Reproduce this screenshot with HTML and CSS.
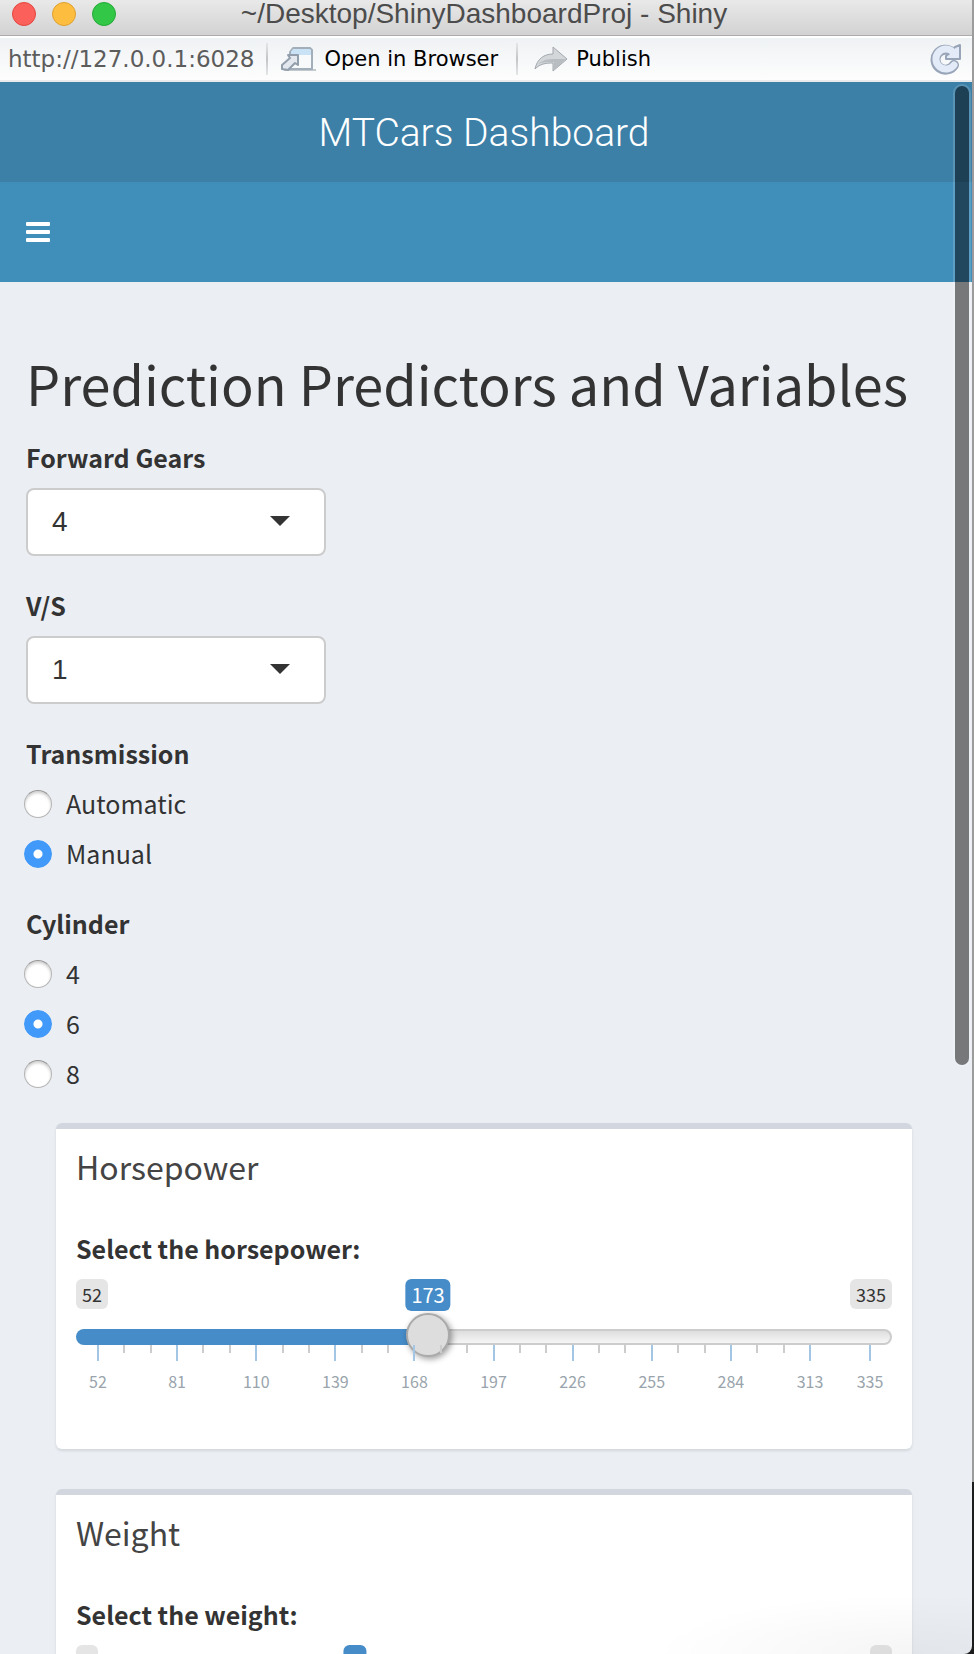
FILE: index.html
```html
<!DOCTYPE html>
<html lang="en">
<head>
<meta charset="utf-8">
<title>~/Desktop/ShinyDashboardProj - Shiny</title>
<link rel="stylesheet" href="styles.css">
</head>
<body>
<div class="window">
  <header class="titlebar">
    <div class="lights">
      <button class="light light-close" type="button" aria-label="Close"></button>
      <button class="light light-min" type="button" aria-label="Minimize"></button>
      <button class="light light-zoom" type="button" aria-label="Zoom"></button>
    </div>
    <div class="window-title">~/Desktop/ShinyDashboardProj - Shiny</div>
  </header>

  <div class="toolbar">
    <span class="address">http://127.0.0.1:6028</span>
    <span class="divider"></span>
    <button class="tool" type="button">
      <svg width="36" height="26" viewBox="0 0 36 26" aria-hidden="true">
        <path d="M4 24H36" stroke="#c3c8cd" stroke-width="2"/>
        <path d="M10 22V6L13 2H30L32 4V23H10Z" fill="#f7f9fb" stroke="#a3aebb" stroke-width="2" stroke-linejoin="round"/>
        <path d="M11 9V6L13 3H30L31 5V9Z" fill="#c9e2f5"/>
        <path d="M8 9H18V19L15 17L8 24L2 23L2 19L10 12Z" fill="#e3e8ee" stroke="#939eac" stroke-width="2" stroke-linejoin="round"/>
      </svg>
      <span>Open in Browser</span>
    </button>
    <span class="divider"></span>
    <button class="tool tool-publish" type="button">
      <svg width="34" height="26" viewBox="0 0 34 26" aria-hidden="true">
        <path d="M1 23C3 13 10 8 19 8V1L33 13L19 25V17C11 17 6 18 1 23Z" fill="#d3d7da" stroke="#a3a8ad" stroke-width="1"/>
        <path d="M3 19C6 16 11 13 19 13H32L20 24V16C11 16 7 16 3 19Z" fill="#b8bdc1"/>
      </svg>
      <span>Publish</span>
    </button>
    <button class="tool tool-refresh" type="button" aria-label="Refresh">
      <svg width="32" height="32" viewBox="0 0 32 32" aria-hidden="true">
        <path d="M22 9A10 10 0 1 0 24 22" fill="none" stroke="#98a4b8" stroke-width="10" stroke-linecap="round"/>
        <path d="M30 2V16H16V13L20 10L25 4Z" fill="#e2ebf7" stroke="#98a4b8" stroke-width="2" stroke-linejoin="round"/>
        <path d="M23 9A10 10 0 1 0 24 22" fill="none" stroke="#e2ebf7" stroke-width="7" stroke-linecap="round"/>
      </svg>
    </button>
  </div>

  <div class="viewport">
    <div class="brand">MTCars Dashboard</div>
    <nav class="navbar">
      <button class="menu-toggle" type="button" aria-label="Toggle navigation">
        <span></span><span></span><span></span>
      </button>
    </nav>

    <main class="content">
      <h2 class="page-title">Prediction Predictors and Variables</h2>

      <div class="field">
        <label class="field-label" for="gears">Forward Gears</label>
        <div class="select">
          <select id="gears"><option>3</option><option selected>4</option><option>5</option></select>
        </div>
      </div>

      <div class="field">
        <label class="field-label" for="vs">V/S</label>
        <div class="select">
          <select id="vs"><option>0</option><option selected>1</option></select>
        </div>
      </div>

      <fieldset class="field options">
        <legend class="field-label">Transmission</legend>
        <label class="option"><input type="radio" name="am"><span>Automatic</span></label>
        <label class="option"><input type="radio" name="am" checked><span>Manual</span></label>
      </fieldset>

      <fieldset class="field options">
        <legend class="field-label">Cylinder</legend>
        <label class="option"><input type="radio" name="cyl"><span>4</span></label>
        <label class="option"><input type="radio" name="cyl" checked><span>6</span></label>
        <label class="option"><input type="radio" name="cyl"><span>8</span></label>
      </fieldset>

      <section class="box">
        <h3 class="box-title">Horsepower</h3>
        <label class="field-label" for="hp">Select the horsepower:</label>
        <div class="slider" data-step="29" data-minor="3">
          <div class="slider-badges">
            <span class="badge">52</span>
            <output class="badge badge-value" for="hp">173</output>
            <span class="badge">335</span>
          </div>
          <input id="hp" type="range" min="52" max="335" value="173">
          <div class="ticks"></div>
        </div>
      </section>

      <section class="box">
        <h3 class="box-title">Weight</h3>
        <label class="field-label" for="wt">Select the weight:</label>
        <div class="slider" data-step="1" data-minor="3">
          <div class="slider-badges">
            <span class="badge">2</span>
            <output class="badge badge-value" for="wt">3</output>
            <span class="badge">5</span>
          </div>
          <input id="wt" type="range" min="2" max="5" value="3">
          <div class="ticks"></div>
        </div>
      </section>
    </main>
    <div class="scroll-thumb"></div>
    <div class="corner-shade"></div>
  </div>
</div>
<script src="slider.js"></script>
</body>
</html>
```
FILE: styles.css
```css
* { box-sizing: border-box; }

html { height: 100%; }

body {
  height: 100%;
  margin: 0;
  padding-right: 2px;
  overflow: hidden;
  background: linear-gradient(#9c9c9c calc(100% - 172px), #1c1c1c calc(100% - 172px));
  color: #333;
  font-family: "Noto Sans CJK SC", "Noto Sans", sans-serif;
  font-size: 25px;
  line-height: 40px;
}

button {
  padding: 0;
  border: 0;
  background: none;
  color: inherit;
  font: inherit;
}

.window {
  display: flex;
  flex-direction: column;
  height: 100%;
  overflow: hidden;
  border-bottom-right-radius: 8px;
  background: #ebeff4;
}

.titlebar {
  display: grid;
  grid-template-columns: 1fr auto 1fr;
  align-items: center;
  flex: none;
  height: 36px;
  padding: 0 16px 8px 12px;
  border-bottom: 1px solid #acacac;
  background: linear-gradient(#e9e9e9, #d2d2d2);
}

.lights { display: flex; gap: 16px; }

.light {
  width: 24px;
  height: 24px;
  border: 1px solid;
  border-radius: 50%;
}
.light-close { border-color: #e2463f; background: #fc605b; }
.light-min { border-color: #dfa033; background: #fdbe40; }
.light-zoom { border-color: #24a938; background: #33c748; }

.window-title {
  color: #4c4c4c;
  font: 28px/28px "Liberation Sans", Arial, sans-serif;
}

.toolbar {
  display: flex;
  align-items: center;
  gap: 12px;
  flex: none;
  height: 46px;
  padding: 0 10px 0 8px;
  border-top: 2px solid #fff;
  border-bottom: 2px solid #e8eaec;
  background: linear-gradient(#eff2f4, #fdfdfd);
  color: #000;
  font: 21px/28px "DejaVu Sans", sans-serif;
}

.address { color: #5c5c5c; font-size: 23px; }

.divider {
  width: 2px;
  height: 32px;
  background: linear-gradient(#e4e6e8, #c2c4c6, #e4e6e8);
}

.tool { display: flex; align-items: center; gap: 8px; padding-right: 6px; }
.tool-publish { padding-left: 4px; }
.tool-refresh { margin-left: auto; padding: 0; }

.viewport {
  position: relative;
  flex: 1;
  min-height: 0;
  overflow: hidden;
}

.brand {
  height: 100px;
  padding: 2px 4px 0 0;
  background: #3c80a8;
  color: #fff;
  font: 300 39px/98px Roboto, "Liberation Sans", sans-serif;
  text-align: center;
}

.navbar {
  display: flex;
  align-items: center;
  height: 100px;
  padding: 0 26px;
  background: #408eba;
}

.menu-toggle { display: grid; gap: 4px; width: 24px; }
.menu-toggle span { height: 4px; border-radius: 1px; background: #fff; }

.content { padding: 68px 60px 0 26px; }

.page-title {
  margin: 0 0 21px;
  font-size: 54px;
  font-weight: 400;
  line-height: 66px;
  white-space: nowrap;
}

.field {
  min-width: 0;
  margin: 0 0 29px;
  padding: 0;
  border: 0;
}

.field-label {
  display: block;
  margin-bottom: 11px;
  padding: 0;
  font-weight: 700;
}

.select { position: relative; width: 300px; }

.select::after {
  content: "";
  position: absolute;
  top: 28px;
  right: 36px;
  border: 10px solid transparent;
  border-top-color: #333;
  border-bottom: 0;
  pointer-events: none;
}

.select select {
  display: block;
  width: 100%;
  height: 68px;
  padding: 0 24px;
  border: 2px solid #ccc;
  border-radius: 8px;
  appearance: none;
  background: #fff;
  color: #333;
  font: 28px/40px "Liberation Sans", Arial, sans-serif;
}

.options { margin-bottom: 19px; }

.option {
  display: flex;
  align-items: center;
  gap: 14px;
  height: 40px;
  margin: 0 0 10px -2px;
}

.option span { padding-bottom: 2px; }

.option input {
  width: 28px;
  height: 28px;
  margin: 0;
  border: 1px solid #b4b4b4;
  border-top-color: #969696;
  border-radius: 50%;
  appearance: none;
  background: #fff;
  box-shadow: inset 0 2px 3px #0003;
}

.option input:checked {
  border-color: #4199f9;
  background: radial-gradient(circle, #fff 4px, #4199f9 5px);
  box-shadow: none;
}

.box {
  margin: 0 0 40px 30px;
  padding: 17px 20px 40px;
  border-top: 6px solid #d2d6df;
  border-radius: 6px;
  background: #fff;
  box-shadow: 0 2px 3px #0000001a;
}

.box-title {
  margin: 0 0 42px;
  color: #444;
  font-size: 32px;
  font-weight: 400;
  line-height: 40px;
}

.slider { position: relative; }

.slider-badges {
  display: flex;
  justify-content: space-between;
  align-items: flex-start;
  height: 50px;
}

.badge {
  padding: 0 6px;
  border-radius: 6px;
  background: #e5e5e5;
  font-size: 18px;
  line-height: 30px;
}

.badge-value {
  position: absolute;
  left: calc(22px + (100% - 44px) * var(--ratio));
  transform: translateX(-50%);
  background: #468cc8;
  color: #fff;
  font-size: 20px;
  line-height: 32px;
}

.slider input {
  display: block;
  width: 100%;
  height: 16px;
  margin: 0;
  appearance: none;
  background: none;
}

.slider input::-webkit-slider-runnable-track {
  height: 16px;
  border: 2px solid transparent;
  border-radius: 8px;
  background:
    linear-gradient(#468cc8, #468cc8) 0 0 / calc(22px + (100% - 44px) * var(--ratio)) 100% no-repeat border-box,
    linear-gradient(#dedede, #f6f6f6) padding-box,
    #ccc border-box;
}

.slider input::-webkit-slider-thumb {
  width: 44px;
  height: 44px;
  margin-top: -18px;
  border: 2px solid #aaa;
  border-radius: 50%;
  appearance: none;
  background: #ddd;
  box-shadow: 2px 2px 6px #0006;
}

.ticks {
  position: relative;
  height: 64px;
  margin: 0 22px;
  color: #99a4ac;
  font-size: 16px;
  line-height: 24px;
}

.tick {
  position: absolute;
  top: 0;
  width: 2px;
  height: 8px;
  margin-left: -1px;
  background: #ccc;
}
.tick-major { height: 16px; background: #a2c6e4; }

.tick-label {
  position: absolute;
  top: 24px;
  transform: translateX(-50%);
}

.scroll-thumb {
  position: absolute;
  top: 4px;
  right: 3px;
  width: 14px;
  height: calc(62% + 4px);
  border-radius: 7px;
  background: #0000007f;
  box-shadow: 0 0 0 2px #ffffff26;
}

.corner-shade {
  position: absolute;
  right: 0;
  bottom: 0;
  width: 320px;
  height: 60px;
  background: radial-gradient(farthest-side at 80% 100%, #0000000a, transparent);
  pointer-events: none;
}
```
FILE: slider.js
```js
document.querySelectorAll(".slider").forEach(function (slider) {
  var input = slider.querySelector("input");
  var output = slider.querySelector("output");
  var ticks = slider.querySelector(".ticks");
  var min = +input.min, max = +input.max;
  var step = +slider.dataset.step, minor = +slider.dataset.minor;

  function add(className, value, text) {
    var el = document.createElement("span");
    el.className = className;
    el.style.left = (value - min) / (max - min) * 100 + "%";
    if (text !== undefined) el.textContent = text;
    ticks.appendChild(el);
  }

  function update() {
    output.value = input.value;
    slider.style.setProperty("--ratio", (input.value - min) / (max - min));
  }

  for (var v = min; v < max; v += step) {
    add("tick tick-major", v);
    add("tick-label", v, v);
    if (v + step <= max) {
      for (var i = 1; i < minor; i++) add("tick", v + step * i / minor);
    }
  }
  add("tick tick-major", max);
  add("tick-label", max, max);

  input.addEventListener("input", update);
  update();
});
```
